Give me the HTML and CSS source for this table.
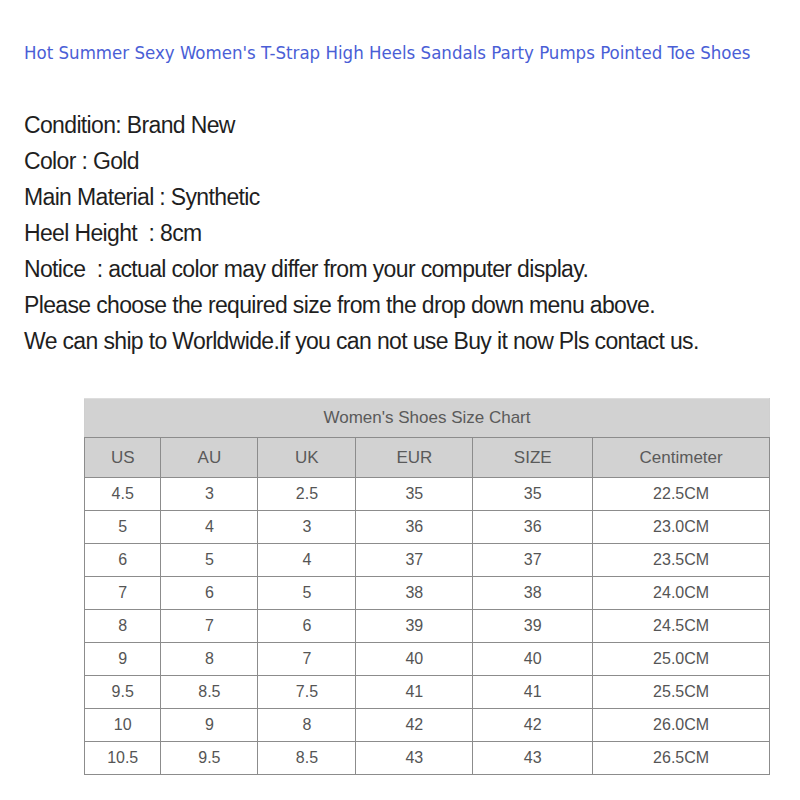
FILE: index.html
```html
<!DOCTYPE html>
<html>
<head>
<meta charset="utf-8">
<link rel="stylesheet" href="styles.css">
</head>
<body>
<div class="page">
  <h1 class="title">Hot Summer Sexy Women's T-Strap High Heels Sandals Party Pumps Pointed Toe Shoes</h1>
  <div class="specs">
    <p>Condition: Brand New</p>
    <p>Color : Gold</p>
    <p>Main Material : Synthetic</p>
    <p>Heel Height &nbsp;: 8cm</p>
    <p>Notice &nbsp;: actual color may differ from your computer display.</p>
    <p>Please choose the required size from the drop down menu above.</p>
    <p>We can ship to Worldwide.if you can not use Buy it now Pls contact us.</p>
  </div>
  <table class="chart">
    <thead>
      <tr class="caption-row"><th colspan="6">Women's Shoes Size Chart</th></tr>
      <tr class="head-row">
        <th class="c-us">US</th><th class="c-au">AU</th><th class="c-uk">UK</th><th class="c-eur">EUR</th><th class="c-size">SIZE</th><th class="c-cm">Centimeter</th>
      </tr>
    </thead>
    <tbody>
      <tr><td>4.5</td><td>3</td><td>2.5</td><td>35</td><td>35</td><td>22.5CM</td></tr>
      <tr><td>5</td><td>4</td><td>3</td><td>36</td><td>36</td><td>23.0CM</td></tr>
      <tr><td>6</td><td>5</td><td>4</td><td>37</td><td>37</td><td>23.5CM</td></tr>
      <tr><td>7</td><td>6</td><td>5</td><td>38</td><td>38</td><td>24.0CM</td></tr>
      <tr><td>8</td><td>7</td><td>6</td><td>39</td><td>39</td><td>24.5CM</td></tr>
      <tr><td>9</td><td>8</td><td>7</td><td>40</td><td>40</td><td>25.0CM</td></tr>
      <tr><td>9.5</td><td>8.5</td><td>7.5</td><td>41</td><td>41</td><td>25.5CM</td></tr>
      <tr><td>10</td><td>9</td><td>8</td><td>42</td><td>42</td><td>26.0CM</td></tr>
      <tr><td>10.5</td><td>9.5</td><td>8.5</td><td>43</td><td>43</td><td>26.5CM</td></tr>
    </tbody>
  </table>
</div>
</body>
</html>
```

FILE: styles.css
```css
html, body {
  margin: 0;
  padding: 0;
  background: #ffffff;
}

.page {
  padding: 40px 0 0 24px;
}

.title {
  margin: 0;
  font-family: "DejaVu Sans Condensed", "DejaVu Sans", sans-serif;
  font-weight: normal;
  font-size: 18.5px;
  line-height: 26px;
  color: #4a5ed6;
}

.specs {
  margin-top: 41px;
  font-family: "Liberation Sans", Arial, sans-serif;
  font-size: 23px;
  letter-spacing: -0.65px;
  color: #1f1f1f;
}

.specs p {
  margin: 0;
  line-height: 36px;
}

.chart {
  margin: 39px 0 0 60px;
  border-collapse: collapse;
  width: 686px;
  font-family: "Liberation Sans", Arial, sans-serif;
  font-size: 16px;
  color: #555555;
  text-align: center;
}

.chart th,
.chart td {
  border: 1px solid #8c8c8c;
  font-weight: normal;
  padding: 0;
}

.caption-row th {
  height: 38px;
  background: #d2d2d2;
  border-top-color: #dddddd;
  border-left-color: #cfcfcf;
  border-right-color: #cfcfcf;
  font-size: 17px;
  color: #5a5a5a;
}

.head-row th {
  height: 39px;
  background: #d2d2d2;
  font-size: 17px;
  color: #5a5a5a;
}

.chart td {
  height: 32px;
  background: #ffffff;
}

.c-us { width: 76px; }
.c-au { width: 97px; }
.c-uk { width: 98px; }
.c-eur { width: 117px; }
.c-size { width: 120px; }
.c-cm { width: 177px; }
```
